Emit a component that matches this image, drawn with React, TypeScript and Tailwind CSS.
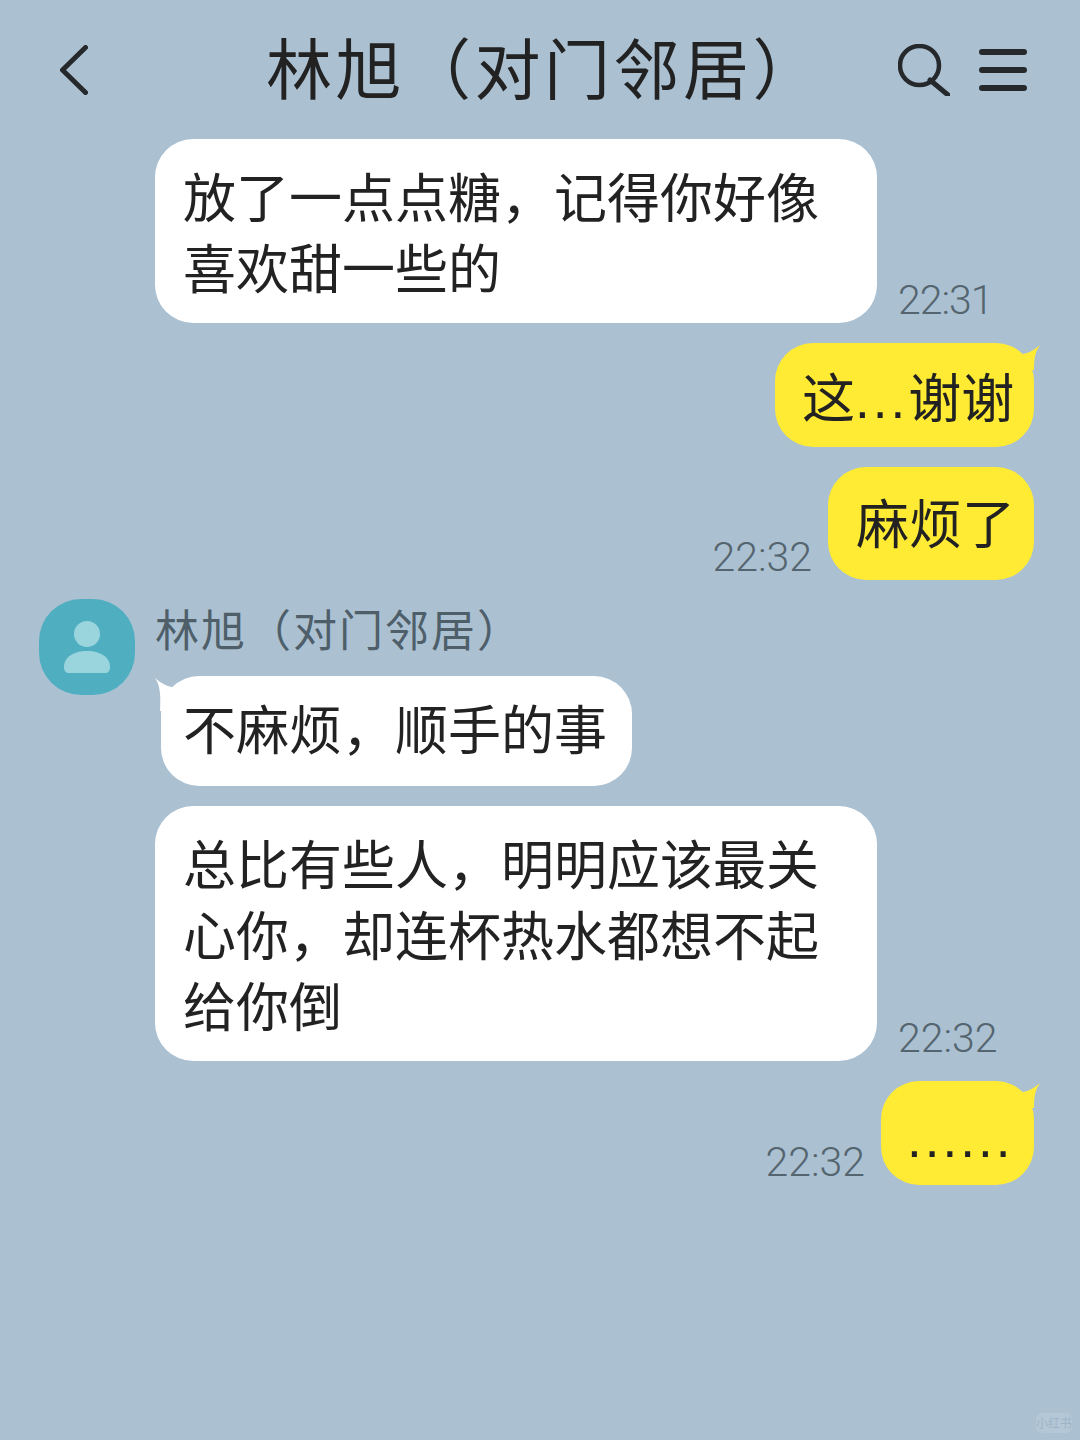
import React from "react";

const cjk = "font-['Noto_Sans_CJK_SC','Noto_Sans_CJK_JP',sans-serif]";

const TailRight = () => (
  <svg className="absolute right-[-6px] top-[1px] w-[26px] h-[26px]" viewBox="0 0 26 26">
    <path d="M26 1 C20 6 15 9 9 10 L0 26 L20 26 C20 15 21 8 26 1 Z" fill="#ffeb33" />
  </svg>
);

const TailLeft = () => (
  <svg className="absolute left-[-6px] top-[1px] w-[26px] h-[34px]" viewBox="0 0 26 34">
    <path d="M0 1 C6 6 11 9 17 10 L26 34 L5 34 C6 18 5 8 0 1 Z" fill="#ffffff" />
  </svg>
);

const Time = ({ children, className = "" }: { children: React.ReactNode; className?: string }) => (
  <span className={`font-['Roboto',sans-serif] text-[41px] leading-[48px] font-light text-[#55656f] ${className}`}>
    {children}
  </span>
);

function App() {
  return (
    <div className={`relative w-[1080px] h-[1440px] overflow-hidden bg-[#abc1d2] text-[#222222] ${cjk}`}>
      {/* header */}
      <header className="h-[139px] flex items-center pl-[60px]">
        <svg className="w-[28px] h-[50px]" viewBox="0 0 28 50" fill="none">
          <path d="M25.5 2.5 L2.5 25 L25.5 47.5" stroke="#26292c" strokeWidth="5" strokeLinecap="round" strokeLinejoin="round" />
        </svg>
        <h1 className="ml-[178px] mb-[10px] w-[527px] text-[66px] leading-[80px] tracking-[3.5px] whitespace-nowrap">林旭（对门邻居）</h1>
        <svg className="ml-[105px] w-[52px] h-[52px]" viewBox="0 0 52 52" fill="none">
          <circle cx="21.5" cy="21.5" r="19.5" stroke="#26292c" strokeWidth="4.5" />
          <path d="M32 36 L50 51" stroke="#26292c" strokeWidth="5" strokeLinecap="round" />
        </svg>
        <div className="ml-[29px] w-[48px] flex flex-col gap-[12px]">
          <div className="h-[6px] rounded-full bg-[#26292c]" />
          <div className="h-[6px] rounded-full bg-[#26292c]" />
          <div className="h-[6px] rounded-full bg-[#26292c]" />
        </div>
      </header>

      <main className="flex flex-col">
        <div className="ml-[155px] flex items-end">
          <div className="w-[722px] h-[184px] rounded-[38px] bg-white pl-[28px] pr-[20px] pt-[21px] text-[53px] leading-[71px]">
            放了一点点糖，记得你好像
            <br />
            喜欢甜一些的
          </div>
          <Time className="ml-[21px] mb-[-1px] tracking-[-1px]">22:31</Time>
        </div>

        <div className="mt-[20px] mr-[46px] flex justify-end">
          <div className="relative h-[104px] w-[259px] rounded-[38px] bg-[#ffeb33] pl-[27px] pt-[17px] text-[53px] leading-[71px] whitespace-nowrap">
            <TailRight />
            <span className="relative">
              这<span className="font-['Liberation_Sans'] tracking-[3px]">...</span>谢谢
            </span>
          </div>
        </div>

        <div className="mt-[20px] mr-[46px] flex justify-end items-end">
          <Time className="mr-[16px] mb-[-1px]">22:32</Time>
          <div className="h-[113px] w-[206px] rounded-[38px] bg-[#ffeb33] pl-[28px] pt-[19px] text-[53px] leading-[71px] whitespace-nowrap">
            麻烦了
          </div>
        </div>

        <div className="mt-[19px] ml-[39px] flex">
          <div className="w-[96px] h-[96px] rounded-[42px] bg-[#4fafc0] flex items-center justify-center">
            <svg className="w-[46px] h-[52px]" viewBox="0 0 46 52">
              <circle cx="23" cy="13" r="13" fill="#9ad5dd" />
              <path d="M0 46 C0 36 10 30 23 30 C36 30 46 36 46 46 C46 50 44 52 41 52 L5 52 C2 52 0 50 0 46 Z" fill="#9ad5dd" />
            </svg>
          </div>
          <div className="ml-[20px] flex flex-col">
            <p className="text-[44px] leading-[58px] tracking-[2px] text-[#4f5f6a] whitespace-nowrap">林旭（对门邻居）</p>
            <div className="relative ml-[6px] mt-[19px] h-[110px] w-[471px] rounded-[38px] bg-white pl-[22px] pt-[16px] text-[53px] leading-[71px] whitespace-nowrap">
              <TailLeft />
              <span className="relative">不麻烦，顺手的事</span>
            </div>
          </div>
        </div>

        <div className="mt-[20px] ml-[155px] flex items-end">
          <div className="w-[722px] h-[255px] rounded-[38px] bg-white pl-[28px] pr-[20px] pt-[21px] text-[53px] leading-[71px] whitespace-nowrap">
            总比有些人，明明应该最关
            <br />
            心你，却连杯热水都想不起
            <br />
            给你倒
          </div>
          <Time className="ml-[21px] mb-[-1px]">22:32</Time>
        </div>

        <div className="mt-[20px] mr-[46px] flex justify-end items-end">
          <Time className="mr-[16px] mb-[-1px]">22:32</Time>
          <div className="relative h-[104px] w-[153px] rounded-[38px] bg-[#ffeb33] pl-[26px] pt-[18px] text-[53px] leading-[71px] whitespace-nowrap">
            <TailRight />
            <span className="relative font-['Liberation_Sans'] tracking-[3px]">......</span>
          </div>
        </div>
      </main>

      {/* faint watermark */}
      <div className="absolute left-[1036px] top-[1413px] w-[36px] h-[20px] rounded-[6px] bg-white/10 text-[12px] leading-[20px] text-center text-[#9db5c7]">
        小红书
      </div>
    </div>
  );
}

export default App;
